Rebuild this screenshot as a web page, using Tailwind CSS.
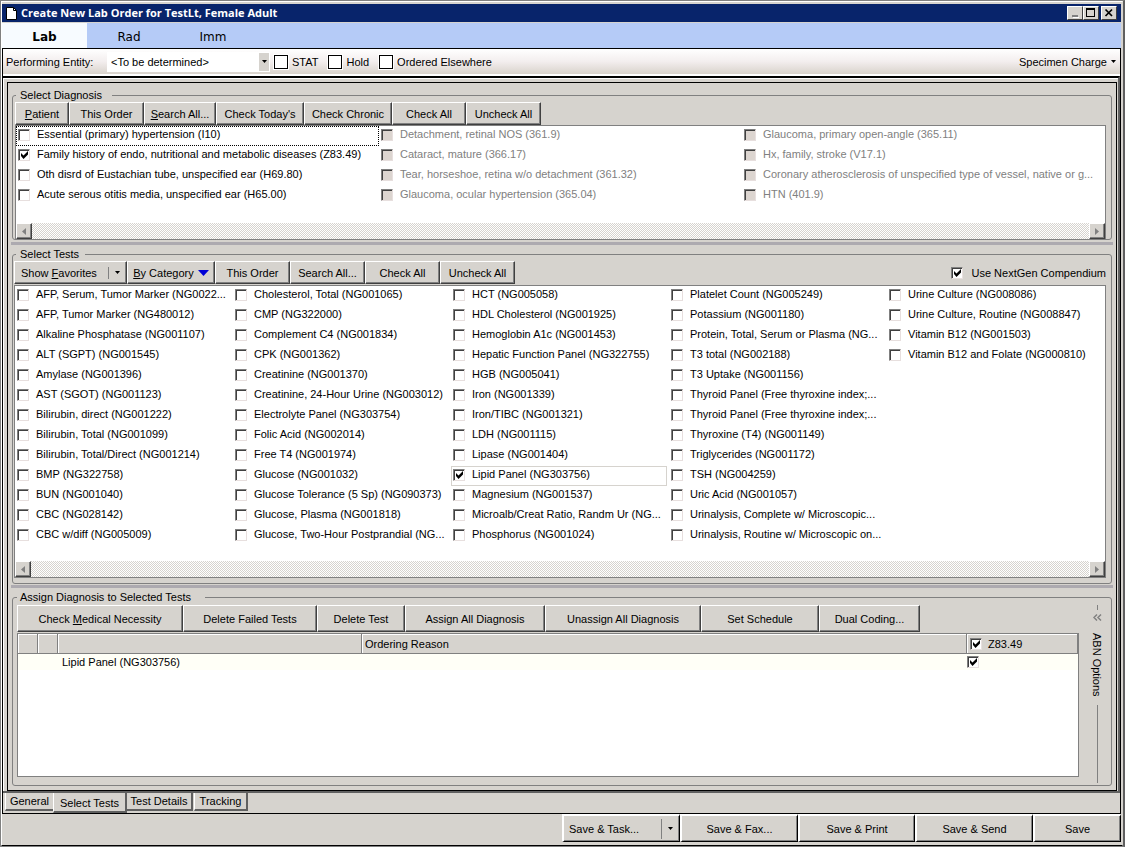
<!DOCTYPE html>
<html lang="en">
<head>
    <meta charset="UTF-8">
    <meta name="viewport" content="width=device-width, initial-scale=1.0">
    <title>Create New Lab Order</title>
    <script src="https://cdn.jsdelivr.net/npm/@tailwindcss/browser@4"></script>
</head>
<body class="flex min-h-screen flex-col border border-[#808080] border-r-2 border-r-[#606060] bg-[#d6d3ce] font-['Liberation_Sans',Arial,sans-serif] text-[11px] leading-[14px] text-black">
    <div class="flex flex-1 flex-col border border-white border-b-black border-r-[#d6d3ce] pr-px pt-0.5 pb-[3px]">

        <!-- Title bar -->
        <header class="flex h-[18px] items-center justify-between bg-[#08246b] px-1">
            <h1 class="flex items-center gap-1 font-['Open_Sans','Noto_Sans',sans-serif] text-[11px] font-bold text-white">
                <svg class="h-[13px] w-[11px]" viewBox="0 0 11 13" fill="#fff" stroke="#000"><path d="M.5.5h7l3 3v9H.5z"/><path d="M7.5.5v3h3" fill="none"/></svg>
                Create New Lab Order for TestLt, Female Adult
            </h1>
            <div class="flex">
                <button aria-label="Minimize" class="flex h-[14px] w-4 items-center justify-center border border-white border-b-[#404040] border-r-[#404040] bg-[#d6d3ce]">
                    <svg class="h-[10px] w-3" viewBox="0 0 12 10"><path d="M3 7h6v2H3z" fill="#808080"/><path d="M4 9h6v1H4z" fill="#fff"/></svg>
                </button>
                <button aria-label="Maximize" class="flex h-[14px] w-4 items-center justify-center border border-white border-b-[#404040] border-r-[#404040] bg-[#d6d3ce]">
                    <svg class="h-[10px] w-3" viewBox="0 0 12 10"><path d="M1 0h9v9H1zM2 2v6h7V2z" fill="#000" fill-rule="evenodd"/></svg>
                </button>
                <button aria-label="Close" class="ml-0.5 flex h-[14px] w-4 items-center justify-center border border-white border-b-[#404040] border-r-[#404040] bg-[#d6d3ce]">
                    <svg class="h-[10px] w-3" viewBox="0 0 12 10"><path d="M2.500 1.500l6.500 6.500M9 1.500L2.500 8" stroke="#000" stroke-width="1.700"/></svg>
                </button>
            </div>
        </header>

        <!-- Order type tabs -->
        <nav class="mt-px flex h-[25px] bg-[#b5cbf7] font-['DejaVu_Sans',sans-serif] text-[12px]">
            <button class="w-[85px] bg-[#f7fbff] pt-0.5 font-bold">Lab</button>
            <button class="w-[84px] pt-0.5">Rad</button>
            <button class="w-[84px] pt-0.5">Imm</button>
        </nav>

        <div class="flex flex-1 flex-col border border-black">
            <!-- Order options -->
            <div class="flex h-[27px] items-center border-b-2 border-white bg-linear-to-b from-white via-[#f3eeee] to-[#d9d3cc] pl-[3px] pr-1">
                <label for="entity" class="w-[101px]">Performing Entity:</label>
                <div class="relative mr-1 w-[163px]">
                    <select id="entity" class="h-5 w-full appearance-none bg-white pl-1">
                        <option>&lt;To be determined&gt;</option>
                    </select>
                    <span class="pointer-events-none absolute inset-y-0 right-0 flex w-3 items-center justify-center border border-white bg-[#d6d3ce]">
                        <svg class="h-[3px] w-[5px]" viewBox="0 0 5 3"><path d="M0 0h5L2.500 3z"/></svg>
                    </span>
                </div>
                <label class="mr-[10px] flex items-center gap-1"><input type="checkbox" class="size-[14px] appearance-none border border-black bg-white outline outline-white">STAT</label>
                <label class="mr-[10px] flex items-center gap-1"><input type="checkbox" class="size-[14px] appearance-none border border-black bg-white outline outline-white">Hold</label>
                <label class="flex items-center gap-1"><input type="checkbox" class="size-[14px] appearance-none border border-black bg-white outline outline-white">Ordered Elsewhere</label>
                <button class="ml-auto flex items-center gap-1">Specimen Charge
                    <svg class="h-[3px] w-[5px]" viewBox="0 0 5 3"><path d="M0 0h5L2.500 3z"/></svg>
                </button>
            </div>

            <div class="flex flex-1 flex-col border-b-2 border-r-2 border-t-2 border-b-[#606060] border-r-[#606060] border-t-black">
                <main class="flex flex-1 flex-col border-l border-t border-white pl-[3px] pr-px pt-[3px]">
                    <div class="flex flex-1 flex-col border border-black px-[3px] pb-1 pt-[5px]">

                        <!-- Select Diagnosis -->
                        <fieldset class="mx-px min-w-0 rounded-[3px] border border-[#808080] px-0.5">
                            <legend class="ml-px pl-1 pr-2.5">Select Diagnosis</legend>
                            <div class="flex h-[23px]">
                                <button class="w-[54px] border border-white border-b-[#404040] border-r-[#404040] shadow-[inset_-1px_-1px_#808080]"><u>P</u>atient</button>
                                <button class="w-[75px] border border-white border-b-[#404040] border-r-[#404040] shadow-[inset_-1px_-1px_#808080]">This Order</button>
                                <button class="w-[72px] border border-white border-b-[#404040] border-r-[#404040] shadow-[inset_-1px_-1px_#808080]"><u>S</u>earch All...</button>
                                <button class="w-[88px] border border-white border-b-[#404040] border-r-[#404040] shadow-[inset_-1px_-1px_#808080]">Check Today's</button>
                                <button class="w-[88px] border border-white border-b-[#404040] border-r-[#404040] shadow-[inset_-1px_-1px_#808080]">Check Chronic</button>
                                <button class="w-[74px] border border-white border-b-[#404040] border-r-[#404040] shadow-[inset_-1px_-1px_#808080]">Check All</button>
                                <button class="w-[75px] border border-white border-b-[#404040] border-r-[#404040] shadow-[inset_-1px_-1px_#808080]">Uncheck All</button>
                            </div>
                            <div class="mr-[3px] border border-b-0 border-[#808080] bg-white">
                                <div id="diagnosis-list" class="grid h-[97px] grid-flow-col grid-cols-3 grid-rows-[repeat(4,20px)]"></div>
                                <div class="flex h-4 justify-between bg-[repeating-conic-gradient(#ffffff_0_25%,#d6d3ce_0_50%)] bg-[length:2px_2px]">
                                    <button aria-label="Scroll left" class="flex size-4 items-center justify-center border border-white border-b-[#404040] border-r-[#404040] bg-[#d6d3ce] shadow-[inset_-1px_-1px_#808080]"><svg class="h-[7px] w-1" viewBox="0 0 4 7" fill="#808080"><path d="M4 0v7L0 3.500z"/></svg></button>
                                    <button aria-label="Scroll right" class="flex size-4 items-center justify-center border border-white border-b-[#404040] border-r-[#404040] bg-[#d6d3ce] shadow-[inset_-1px_-1px_#808080]"><svg class="h-[7px] w-1" viewBox="0 0 4 7" fill="#808080"><path d="M0 0v7l4-3.500z"/></svg></button>
                                </div>
                            </div>
                        </fieldset>

                        <div class="my-0.5 h-[3px] bg-[#adaab0]"></div>

                        <!-- Select Tests -->
                        <fieldset class="mx-px min-w-0 rounded-[3px] border border-[#808080] px-px pb-[5px]">
                            <legend class="ml-0.5 pl-1 pr-1.5">Select Tests</legend>
                            <div class="flex h-[23px]">
                                <button class="flex w-[113px] items-center border border-white border-b-[#404040] border-r-[#404040] pl-1.5 shadow-[inset_-1px_-1px_#808080]">
                                    <span>Show <u>F</u>avorites</span>
                                    <span class="ml-auto h-3 border-l border-[#808080]"></span>
                                    <svg class="mx-1.5 h-[3px] w-[5px]" viewBox="0 0 5 3"><path d="M0 0h5L2.500 3z"/></svg>
                                </button>
                                <button class="flex w-[88px] items-center justify-center gap-1 border border-white border-b-[#404040] border-r-[#404040] shadow-[inset_-1px_-1px_#808080]">
                                    <span><u>B</u>y Category</span>
                                    <svg class="h-1.5 w-[11px]" viewBox="0 0 11 6"><path d="M0 0h11L5.500 6z" fill="#0000d6"/></svg>
                                </button>
                                <button class="w-[75px] border border-white border-b-[#404040] border-r-[#404040] shadow-[inset_-1px_-1px_#808080]">This Order</button>
                                <button class="w-[75px] border border-white border-b-[#404040] border-r-[#404040] shadow-[inset_-1px_-1px_#808080]">Search All...</button>
                                <button class="w-[75px] border border-white border-b-[#404040] border-r-[#404040] shadow-[inset_-1px_-1px_#808080]">Check All</button>
                                <button class="w-[75px] border border-white border-b-[#404040] border-r-[#404040] shadow-[inset_-1px_-1px_#808080]">Uncheck All</button>
                                <label class="ml-auto mr-1 flex items-center gap-2">
                                    <span class="relative size-3 shrink-0">
                                        <input type="checkbox" checked class="peer block size-3 appearance-none border border-[#808080] border-b-[#e7dfde] border-r-[#e7dfde] bg-white shadow-[inset_1px_1px_#404040]">
                                        <svg class="pointer-events-none absolute left-[3px] top-[2px] hidden h-2 w-[7px] peer-checked:block" viewBox="0 0 7 8"><path d="M0 2v3l2.500 3L7 3.500V0L2.500 4.500z"/></svg>
                                    </span>
                                    Use NextGen Compendium
                                </label>
                            </div>
                            <div class="mr-1 mt-px border border-[#808080] bg-white">
                                <div id="test-list" class="grid h-[275px] grid-flow-col grid-cols-5 grid-rows-[repeat(13,20px)]"></div>
                                <div class="flex h-4 justify-between bg-[repeating-conic-gradient(#ffffff_0_25%,#d6d3ce_0_50%)] bg-[length:2px_2px]">
                                    <button aria-label="Scroll left" class="flex size-4 items-center justify-center border border-white border-b-[#404040] border-r-[#404040] bg-[#d6d3ce] shadow-[inset_-1px_-1px_#808080]"><svg class="h-[7px] w-1" viewBox="0 0 4 7" fill="#808080"><path d="M4 0v7L0 3.500z"/></svg></button>
                                    <button aria-label="Scroll right" class="flex size-4 items-center justify-center border border-white border-b-[#404040] border-r-[#404040] bg-[#d6d3ce] shadow-[inset_-1px_-1px_#808080]"><svg class="h-[7px] w-1" viewBox="0 0 4 7" fill="#808080"><path d="M0 0v7l4-3.500z"/></svg></button>
                                </div>
                            </div>
                        </fieldset>

                        <div class="mb-0.5 mt-px h-[3px] bg-[#adaab0]"></div>

                        <!-- Assign Diagnosis to Selected Tests -->
                        <fieldset class="mx-px min-w-0 flex-1 rounded-[3px] border border-[#808080] pb-0.5 pl-1 pr-0.5">
                            <legend class="pl-[3px] pr-3.5">Assign Diagnosis to Selected Tests</legend>
                            <div class="flex gap-1.5">
                                <div class="mb-1.5 flex flex-1 flex-col">
                                    <div class="flex h-[28px] pt-px">
                                        <button class="w-[166px] border border-white border-b-[#404040] border-r-[#404040] shadow-[inset_-1px_-1px_#808080]">Check <u>M</u>edical Necessity</button>
                                        <button class="w-[134px] border border-white border-b-[#404040] border-r-[#404040] shadow-[inset_-1px_-1px_#808080]">Delete Failed Tests</button>
                                        <button class="w-[88px] border border-white border-b-[#404040] border-r-[#404040] shadow-[inset_-1px_-1px_#808080]">Delete Test</button>
                                        <button class="w-[140px] border border-white border-b-[#404040] border-r-[#404040] shadow-[inset_-1px_-1px_#808080]">Assign All Diagnosis</button>
                                        <button class="w-[156px] border border-white border-b-[#404040] border-r-[#404040] shadow-[inset_-1px_-1px_#808080]">Unassign All Diagnosis</button>
                                        <button class="w-[118px] border border-white border-b-[#404040] border-r-[#404040] shadow-[inset_-1px_-1px_#808080]">Set Schedule</button>
                                        <button class="w-[101px] border border-white border-b-[#404040] border-r-[#404040] shadow-[inset_-1px_-1px_#808080]">Dual Coding...</button>
                                    </div>
                                    <div class="mt-px min-h-36 flex-1 border border-[#808080] bg-white">
                                        <table class="w-full table-fixed border-separate border-spacing-0 text-left">
                                            <thead class="bg-[#d6d3ce]">
                                                <tr class="h-5">
                                                    <th class="w-5 border-b border-r border-[#808080] shadow-[inset_1px_1px_#fff]"></th>
                                                    <th class="w-5 border-b border-r border-[#808080] shadow-[inset_1px_1px_#fff]"></th>
                                                    <th class="w-[304px] border-b border-r border-[#808080] shadow-[inset_1px_1px_#fff]"></th>
                                                    <th class="border-b border-r border-[#808080] pl-[3px] font-normal shadow-[inset_1px_1px_#fff]">Ordering Reason</th>
                                                    <th class="w-[111px] border-b border-r border-[#808080] pl-[3px] font-normal shadow-[inset_1px_1px_#fff]">
                                                        <label class="flex items-center gap-1.5">
                                                            <span class="relative size-3 shrink-0">
                                                                <input type="checkbox" checked class="peer block size-3 appearance-none border border-[#808080] border-b-[#e7dfde] border-r-[#e7dfde] bg-white shadow-[inset_1px_1px_#404040]">
                                                                <svg class="pointer-events-none absolute left-[3px] top-[2px] hidden h-2 w-[7px] peer-checked:block" viewBox="0 0 7 8"><path d="M0 2v3l2.500 3L7 3.500V0L2.500 4.500z"/></svg>
                                                            </span>
                                                            Z83.49
                                                        </label>
                                                    </th>
                                                </tr>
                                            </thead>
                                            <tbody>
                                                <tr class="h-4 bg-[#fffff7]">
                                                    <td></td>
                                                    <td></td>
                                                    <td class="pl-1">Lipid Panel (NG303756)</td>
                                                    <td></td>
                                                    <td>
                                                        <div class="relative size-3">
                                                            <input type="checkbox" checked aria-label="Z83.49 for Lipid Panel" class="peer block size-3 appearance-none border border-[#808080] border-b-[#e7dfde] border-r-[#e7dfde] bg-white shadow-[inset_1px_1px_#404040]">
                                                            <svg class="pointer-events-none absolute left-[3px] top-[2px] hidden h-2 w-[7px] peer-checked:block" viewBox="0 0 7 8"><path d="M0 2v3l2.500 3L7 3.500V0L2.500 4.500z"/></svg>
                                                        </div>
                                                    </td>
                                                </tr>
                                            </tbody>
                                        </table>
                                    </div>
                                </div>
                                <button class="flex w-6 flex-col items-center pt-px">
                                    <span class="h-[5px] shrink-0 border-l border-[#808080]"></span>
                                    <svg class="mt-1 h-[7px] w-[9px] shrink-0" viewBox="0 0 9 7" fill="none" stroke="#808080" stroke-width="1.500"><path d="M4 .5l-3 3 3 3M8 .5l-3 3 3 3"/></svg>
                                    <span class="mb-2 mt-3 shrink-0 [writing-mode:vertical-rl]">ABN Options</span>
                                    <span class="flex-1 border-l border-[#808080]"></span>
                                </button>
                            </div>
                        </fieldset>
                    </div>
                </main>
            </div>

            <!-- Page tabs -->
            <nav class="flex h-5 items-start pl-0.5">
                <button class="h-[18px] w-12 border-b-2 border-l border-b-[#606060] border-l-white">General</button>
                <button class="h-5 w-[74px] border-b-2 border-l border-r-2 border-b-[#606060] border-l-white border-r-[#606060] bg-[#d6d3ce] pt-0.5">Select Tests</button>
                <button class="h-[18px] w-[66px] border-b-2 border-r-2 border-[#606060]">Test Details</button>
                <button class="ml-px h-[18px] w-[54px] border-b-2 border-l border-r-2 border-b-[#606060] border-l-white border-r-[#606060]">Tracking</button>
            </nav>
        </div>

        <!-- Save actions -->
        <footer class="flex h-7 justify-end">
            <button class="flex w-[118px] items-center border-l-2 border-t-2 border-b border-r border-white border-b-black border-r-black pl-[5px] shadow-[inset_-1px_-1px_#808080]">
                Save &amp; Task...
                <span class="ml-auto h-5 border-l border-[#808080]"></span>
                <svg class="mx-1.5 h-[3px] w-[5px]" viewBox="0 0 5 3"><path d="M0 0h5L2.500 3z"/></svg>
            </button>
            <button class="w-[118px] border-l-2 border-t-2 border-b border-r border-white border-b-black border-r-black shadow-[inset_-1px_-1px_#808080]">Save &amp; Fax...</button>
            <button class="w-[117px] border-l-2 border-t-2 border-b border-r border-white border-b-black border-r-black shadow-[inset_-1px_-1px_#808080]">Save &amp; Print</button>
            <button class="w-[118px] border-l-2 border-t-2 border-b border-r border-white border-b-black border-r-black shadow-[inset_-1px_-1px_#808080]">Save &amp; Send</button>
            <button class="w-[88px] border-l-2 border-t-2 border-b border-r border-white border-b-black border-r-black shadow-[inset_-1px_-1px_#808080]">Save</button>
        </footer>
    </div>

    <template id="check-item">
        <label class="flex h-5 min-w-0 items-start gap-[7px] overflow-hidden whitespace-nowrap border border-transparent pl-px has-disabled:text-[#808080]">
            <span class="relative mt-0.5 size-3 shrink-0">
                <input type="checkbox" class="peer block size-3 appearance-none border border-[#808080] border-b-[#e7dfde] border-r-[#e7dfde] bg-white shadow-[inset_1px_1px_#404040] disabled:bg-[#dcd5d0]">
                <svg class="pointer-events-none absolute left-[3px] top-[2px] hidden h-2 w-[7px] peer-checked:block" viewBox="0 0 7 8"><path d="M0 2v3l2.500 3L7 3.500V0L2.500 4.500z"/></svg>
            </span>
            <span></span>
        </label>
    </template>

    <script>
        const diagnoses = [
            'Essential (primary) hypertension (I10)',
            'Family history of endo, nutritional and metabolic diseases (Z83.49)',
            'Oth disrd of Eustachian tube, unspecified ear (H69.80)',
            'Acute serous otitis media, unspecified ear (H65.00)',
            'Detachment, retinal NOS (361.9)',
            'Cataract, mature (366.17)',
            'Tear, horseshoe, retina w/o detachment (361.32)',
            'Glaucoma, ocular hypertension (365.04)',
            'Glaucoma, primary open-angle (365.11)',
            'Hx, family, stroke (V17.1)',
            'Coronary atherosclerosis of unspecified type of vessel, native or g...',
            'HTN (401.9)'
        ];

        const tests = [
            'AFP, Serum, Tumor Marker (NG0022...', 'AFP, Tumor Marker (NG480012)', 'Alkaline Phosphatase (NG001107)',
            'ALT (SGPT) (NG001545)', 'Amylase (NG001396)', 'AST (SGOT) (NG001123)', 'Bilirubin, direct (NG001222)',
            'Bilirubin, Total (NG001099)', 'Bilirubin, Total/Direct (NG001214)', 'BMP (NG322758)', 'BUN (NG001040)',
            'CBC (NG028142)', 'CBC w/diff (NG005009)',
            'Cholesterol, Total (NG001065)', 'CMP (NG322000)', 'Complement C4 (NG001834)', 'CPK (NG001362)',
            'Creatinine (NG001370)', 'Creatinine, 24-Hour Urine (NG003012)', 'Electrolyte Panel (NG303754)',
            'Folic Acid (NG002014)', 'Free T4 (NG001974)', 'Glucose (NG001032)', 'Glucose Tolerance (5 Sp) (NG090373)',
            'Glucose, Plasma (NG001818)', 'Glucose, Two-Hour Postprandial (NG...',
            'HCT (NG005058)', 'HDL Cholesterol (NG001925)', 'Hemoglobin A1c (NG001453)', 'Hepatic Function Panel (NG322755)',
            'HGB (NG005041)', 'Iron (NG001339)', 'Iron/TIBC (NG001321)', 'LDH (NG001115)', 'Lipase (NG001404)',
            'Lipid Panel (NG303756)', 'Magnesium (NG001537)', 'Microalb/Creat Ratio, Randm Ur (NG...', 'Phosphorus (NG001024)',
            'Platelet Count (NG005249)', 'Potassium (NG001180)', 'Protein, Total, Serum or Plasma (NG...', 'T3 total (NG002188)',
            'T3 Uptake (NG001156)', 'Thyroid Panel (Free thyroxine index;...', 'Thyroid Panel (Free thyroxine index;...',
            'Thyroxine (T4) (NG001149)', 'Triglycerides (NG001172)', 'TSH (NG004259)', 'Uric Acid (NG001057)',
            'Urinalysis, Complete w/ Microscopic...', 'Urinalysis, Routine w/ Microscopic on...',
            'Urine Culture (NG008086)', 'Urine Culture, Routine (NG008847)', 'Vitamin B12 (NG001503)', 'Vitamin B12 and Folate (NG000810)'
        ];

        function addItem(listId, text, checked, disabled, extra) {
            const item = document.getElementById('check-item').content.cloneNode(true);
            const label = item.querySelector('label');
            const input = item.querySelector('input');
            input.checked = checked;
            input.disabled = disabled;
            label.lastElementChild.textContent = text;
            if (extra) {
                label.classList.remove('border-transparent');
                label.classList.add(...extra.split(' '));
            }
            document.getElementById(listId).appendChild(item);
        }

        diagnoses.forEach((d, i) => addItem('diagnosis-list', d, i === 1, i > 3, i === 0 ? 'border-dotted border-black' : ''));
        tests.forEach(t => {
            const selected = t.startsWith('Lipid Panel');
            addItem('test-list', t, selected, false, selected ? 'border-[#d6d3ce] mr-0.5' : '');
        });
    </script>
</body>
</html>
